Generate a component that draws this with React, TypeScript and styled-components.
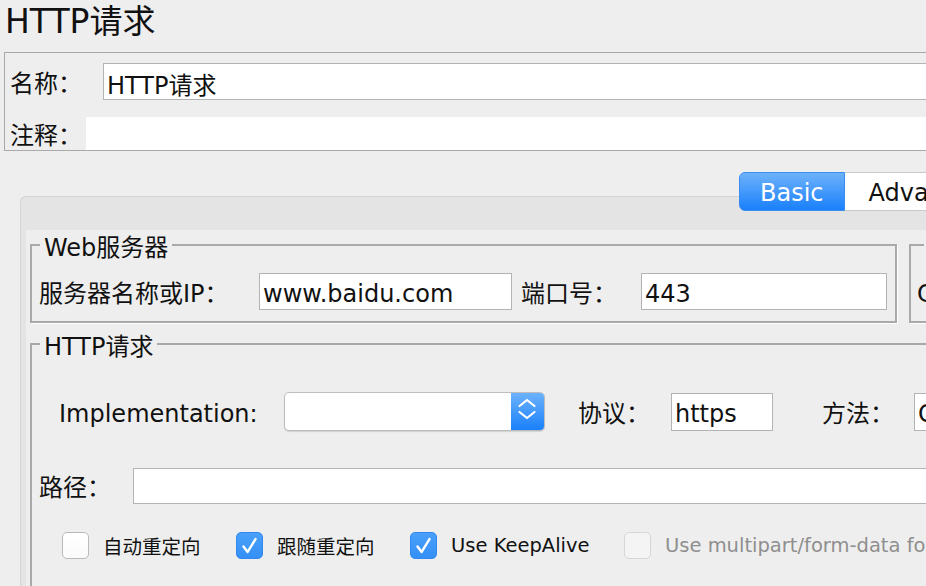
import React from "react";
import styled, { createGlobalStyle } from "styled-components";

const GlobalStyle = createGlobalStyle`
  html, body {
    margin: 0;
    padding: 0;
    width: 926px;
    height: 586px;
    overflow: hidden;
    background: #eeeeee;
  }
  body {
    font-family: "DejaVu Sans", "Noto Sans CJK SC", sans-serif;
    color: #111111;
  }
  *, *::before, *::after { box-sizing: border-box; }
`;

const Page = styled.div`
  width: 1240px;
  display: flex;
  flex-direction: column;
`;

const Title = styled.h1`
  margin: 0;
  height: 52px;
  padding-left: 5px;
  font-size: 33px;
  line-height: 44px;
  font-weight: normal;
  white-space: nowrap;
`;

const NamePanel = styled.section`
  margin-left: 4px;
  height: 99px;
  border: 1px solid #a9a9a9;
  padding: 10px 0 0 5px;
  display: flex;
  flex-direction: column;
`;

const Row = styled.div<{ $h: number; $mt?: number; $ml?: number }>`
  display: flex;
  align-items: center;
  height: ${(p) => p.$h}px;
  margin-top: ${(p) => p.$mt ?? 0}px;
  margin-left: ${(p) => p.$ml ?? 0}px;
  flex-shrink: 0;
`;

const Label = styled.span<{ $w: number; $ml?: number }>`
  width: ${(p) => p.$w}px;
  margin-left: ${(p) => p.$ml ?? 0}px;
  flex-shrink: 0;
  font-size: 24px;
  padding-top: 4px;
  line-height: 26px;
  white-space: nowrap;
`;

const Field = styled.div<{ $w?: number; $bare?: boolean; $h?: number }>`
  ${(p) => (p.$w ? `width: ${p.$w}px; flex-shrink: 0;` : `flex: 1;`)}
  height: ${(p) => (p.$h ? `${p.$h}px` : "100%")};
  background: #ffffff;
  border: ${(p) => (p.$bare ? "none" : "1px solid #b3b3b3")};
  padding: 4px 3px 0 3px;
  font-size: 24px;
  display: flex;
  align-items: center;
  white-space: nowrap;
  overflow: hidden;
`;

const TabArea = styled.div`
  margin-top: 21px;
  margin-left: 20px;
  display: flex;
  flex-direction: column;
`;

const TabRow = styled.div`
  display: flex;
  padding-left: 719px;
  height: 39px;
  position: relative;
  z-index: 1;
`;

const Tab = styled.div<{ $active?: boolean }>`
  height: 39px;
  font-size: 24px;
  display: flex;
  align-items: center;
  white-space: nowrap;
  padding-top: 2px;
  ${(p) =>
    p.$active
      ? `
    padding-left: 20px;
    padding-right: 20px;
    color: #ffffff;
    background: linear-gradient(#6db2fb, #1a80fb);
    border: 1px solid #3a8cf0;
    border-radius: 6px 0 0 6px;
  `
      : `
    padding-left: 24px;
    padding-right: 24px;
    color: #111111;
    background: #ffffff;
    border: 1px solid #c9c9c9;
    border-left: none;
  `}
`;

const Pane = styled.div`
  margin-top: -15px;
  border-top: 1px solid #d3d3d3;
  border-left: 1px solid #d3d3d3;
  border-top-left-radius: 6px;
  background: #e4e4e4;
  padding: 33px 0 0 5px;
`;

const PaneBody = styled.div`
  background: #eeeeee;
  padding-left: 4px;
  height: 420px;
  display: flex;
  flex-direction: column;
`;

const ServerRow = styled.div`
  display: flex;
  gap: 12px;
  margin-top: 1px;
`;

const Group = styled.fieldset<{ $w?: number; $h?: number; $pad: string; $mt?: number }>`
  margin: ${(p) => p.$mt ?? 0}px 0 0 0;
  min-width: 0;
  border: 2px solid #a9a9a9;
  box-shadow: 1px 1px 0 #ffffff;
  padding: ${(p) => p.$pad};
  ${(p) => (p.$w ? `width: ${p.$w}px; flex-shrink: 0;` : ``)}
  ${(p) => (p.$h ? `height: ${p.$h}px;` : ``)}
`;

const GroupTitle = styled.legend`
  margin-left: 1px;
  padding: 6px 4px 0 4px;
  font-size: 24px;
  line-height: 22px;
  white-space: nowrap;
`;

const GroupTitleInset = styled(GroupTitle)`
  margin-left: 7px;
`;

const Combo = styled.div`
  width: 261px;
  height: 39px;
  flex-shrink: 0;
  display: flex;
  background: #ffffff;
  border: 1px solid #bdbdbd;
  border-radius: 5px;
  box-shadow: 0 1px 1px rgba(0, 0, 0, 0.12);
  overflow: hidden;
`;

const ComboValue = styled.div`
  flex: 1;
`;

const ComboButton = styled.div`
  width: 33px;
  display: flex;
  align-items: center;
  justify-content: center;
  background: linear-gradient(#6cb2fb, #1a80fb);
`;

const CheckRow = styled.div`
  display: flex;
  align-items: center;
  height: 27px;
  margin-top: 28px;
  margin-left: 23px;
`;

const CheckItem = styled.label<{ $w?: number; $disabled?: boolean }>`
  display: flex;
  align-items: center;
  gap: 14px;
  ${(p) => (p.$w ? `width: ${p.$w}px;` : ``)}
  flex-shrink: 0;
  font-size: 19.5px;
  white-space: nowrap;
  color: ${(p) => (p.$disabled ? "#8e8e8e" : "#111111")};
`;

const Box = styled.span<{ $checked?: boolean; $disabled?: boolean }>`
  width: 27px;
  height: 27px;
  flex-shrink: 0;
  border-radius: 5px;
  display: flex;
  align-items: center;
  justify-content: center;
  ${(p) =>
    p.$checked
      ? `background: linear-gradient(#4aa0fa, #3490f6); border: 1px solid #3288ee;`
      : p.$disabled
      ? `background: #f4f4f4; border: 1px solid #d6d6d6;`
      : `background: linear-gradient(#ffffff, #fafafa); border: 1px solid #bababa;`}
`;

const Check = () => (
  <svg width="27" height="27" viewBox="0 0 27 27" style={{ display: "block" }}>
    <path
      d="M7 14.5 L11.5 20.5 L20 6.5"
      fill="none"
      stroke="#ffffff"
      strokeWidth="2.6"
      strokeLinecap="round"
      strokeLinejoin="round"
    />
  </svg>
);

const Chevrons = () => (
  <svg width="33" height="37" viewBox="0 0 33 37" style={{ display: "block" }}>
    <path
      d="M8.5 13 L16 7 L23.5 13 M8.5 19 L16 25 L23.5 19"
      fill="none"
      stroke="#ffffff"
      strokeWidth="2.2"
      strokeLinecap="round"
      strokeLinejoin="round"
    />
  </svg>
);

const CheckOption = ({
  label,
  checked,
  disabled,
  w,
}: {
  label: string;
  checked?: boolean;
  disabled?: boolean;
  w?: number;
}) => (
  <CheckItem $w={w} $disabled={disabled}>
    <Box $checked={checked} $disabled={disabled}>
      {checked && <Check />}
    </Box>
    {label}
  </CheckItem>
);

export default function App() {
  return (
    <>
      <GlobalStyle />
      <Page>
        <Title>HTTP请求</Title>
        <NamePanel>
          <Row $h={37}>
            <Label $w={93}>名称：</Label>
            <Field>HTTP请求</Field>
          </Row>
          <Row $h={33} $mt={17}>
            <Label $w={76}>注释：</Label>
            <Field $bare />
          </Row>
        </NamePanel>

        <TabArea>
          <TabRow>
            <Tab $active>Basic</Tab>
            <Tab>Advanced</Tab>
          </TabRow>
          <Pane>
            <PaneBody>
              <ServerRow>
                <Group $w={867} $pad="14px 8px 11px 7px">
                  <GroupTitle>Web服务器</GroupTitle>
                  <Row $h={37}>
                    <Label $w={220}>服务器名称或IP：</Label>
                    <Field $w={253}>www.baidu.com</Field>
                    <Label $w={120} $ml={9}>端口号：</Label>
                    <Field $w={246}>443</Field>
                  </Row>
                </Group>
                <Group $w={420} $pad="14px 8px 11px 6px">
                  <GroupTitleInset>Timeouts (milliseconds)</GroupTitleInset>
                  <Row $h={37}>
                    <Label $w={120}>Connect:</Label>
                    <Field $w={200} />
                  </Row>
                </Group>
              </ServerRow>

              <Group $w={1180} $h={330} $mt={7} $pad="34px 0 0 7px">
                <GroupTitle>HTTP请求</GroupTitle>
                <Row $h={39} $ml={20}>
                  <Label $w={225}>Implementation:</Label>
                  <Combo>
                    <ComboValue />
                    <ComboButton>
                      <Chevrons />
                    </ComboButton>
                  </Combo>
                  <Label $w={93} $ml={33}>协议：</Label>
                  <Field $w={102} $h={38}>https</Field>
                  <Label $w={92} $ml={49}>方法：</Label>
                  <Field $w={150} $h={38}>GET</Field>
                </Row>
                <Row $h={36} $mt={37}>
                  <Label $w={94}>路径：</Label>
                  <Field />
                </Row>
                <CheckRow>
                  <CheckOption w={174} label="自动重定向" />
                  <CheckOption w={174} label="跟随重定向" checked />
                  <CheckOption w={214} label="Use KeepAlive" checked />
                  <CheckOption label="Use multipart/form-data for POST" disabled />
                </CheckRow>
              </Group>
            </PaneBody>
          </Pane>
        </TabArea>
      </Page>
    </>
  );
}
